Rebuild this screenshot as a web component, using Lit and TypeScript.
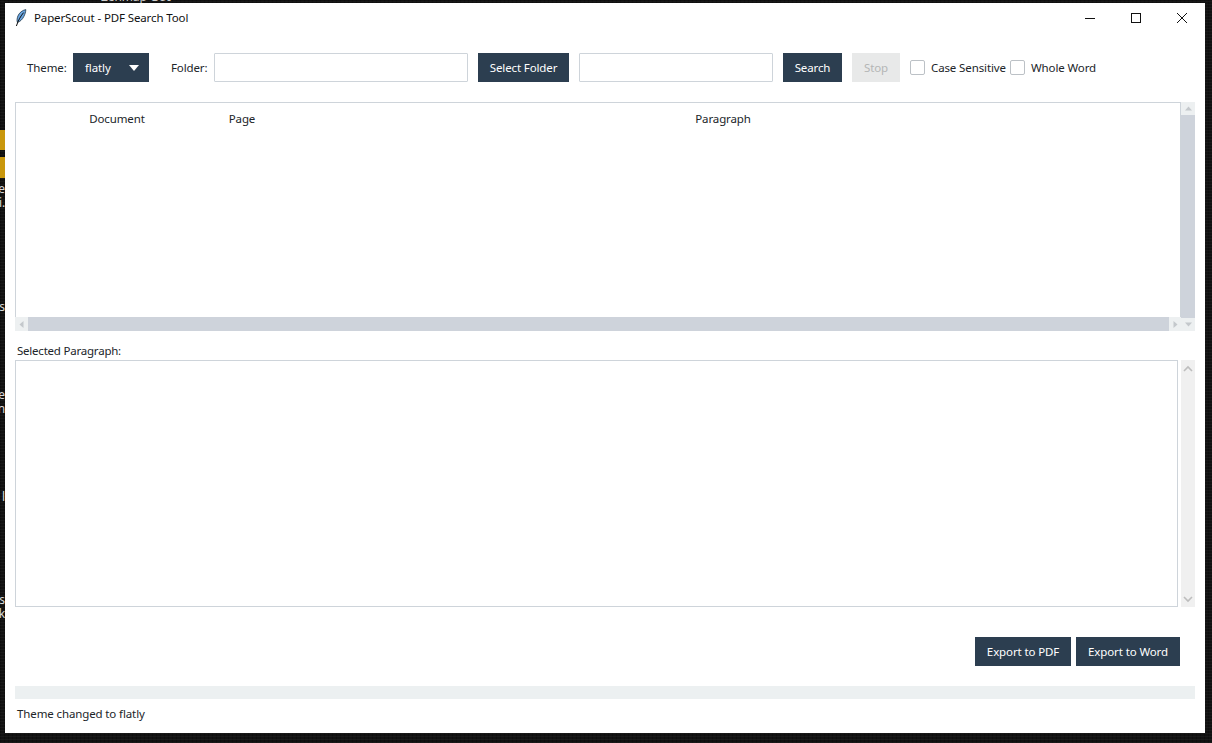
import { LitElement, html, css } from "lit";
import { customElement } from "lit/decorators.js";

const triangle = (d: string, fill: string) =>
  html`<svg width="9" height="9" viewBox="0 0 9 9"><path d="${d}" fill="${fill}"></path></svg>`;

const deskBits: [string, number][] = [
  ["e", 183], ["i.", 197], ["s", 301], ["e", 389], ["n", 403], ["l", 491], ["s", 594], ["k", 608],
];

@customElement("app-root")
export class AppRoot extends LitElement {
  static styles = css`
    :host {
      display: block;
      position: relative;
      width: 1212px;
      height: 743px;
      overflow: hidden;
      background-color: #111;
      background-image:
        repeating-linear-gradient(0deg, rgba(255,255,255,0.035) 0 1px, transparent 1px 3px),
        repeating-linear-gradient(90deg, rgba(0,0,0,0.25) 0 1px, transparent 1px 4px);
      font-family: "Noto Sans", "Open Sans", sans-serif;
      font-size: 11.5px;
      letter-spacing: -0.12px;
      color: #212529;
    }
    .desk { position: absolute; background: #c9970c; width: 5px; left: 0; }
    .desk.a { top: 130px; height: 20px; }
    .desk.b { top: 157px; height: 21px; }
    .desk-bit {
      position: absolute; left: 0; width: 5px; height: 12px; overflow: hidden;
      display: flex; justify-content: flex-end; color: #d8d8d8; font-size: 12px; line-height: 12px;
    }
    .desk-text {
      position: absolute; left: 101px; top: -11px; color: #cfcfcf; font-size: 12px; line-height: 16px;
    }
    .stage { padding: 3px 7px 10px 5px; height: 730px; }
    .window {
      position: relative;
      width: 1200px;
      height: 730px;
      background: #fff;
      display: flex;
      flex-direction: column;
    }
    .title { height: 30px; display: flex; align-items: center; flex: none; }
    .app-icon { margin-left: 10px; width: 12px; height: 18px; flex: none; }
    .title-text { margin-left: 7px; color: #111; line-height: 16px; }
    .caps { margin-left: auto; display: flex; height: 30px; }
    .cap { width: 46px; display: flex; align-items: center; justify-content: center; }
    .toolbar {
      flex: none; height: 29px; margin-top: 20px; padding-left: 22px;
      display: flex; align-items: center;
    }
    .lbl { white-space: nowrap; line-height: 16px; flex: none; }
    .lbl-theme { width: 39px; }
    .lbl-folder { width: 36px; margin-left: 22px; }
    .lbl-case { width: 79px; margin-left: 6px; }
    .lbl-word { margin-left: 6px; }
    .combo {
      width: 76px; height: 29px; margin-left: 7px; background: #2c3e50; color: #fff; flex: none;
      display: flex; align-items: center; padding-left: 12px; box-sizing: border-box;
    }
    .combo i {
      margin-left: auto; margin-right: 10px; width: 0; height: 0;
      border-left: 5.5px solid transparent; border-right: 5.5px solid transparent; border-top: 6px solid #fff;
    }
    .entry { height: 29px; box-sizing: border-box; border: 1px solid #ced4da; border-radius: 1px; background: #fff; flex: none; margin-left: 10px; }
    .entry.folder { width: 254px; margin-left: 7px; }
    .entry.query { width: 194px; }
    .btn {
      height: 29px; box-sizing: border-box; background: #2c3e50; color: #fff; display: flex;
      align-items: center; justify-content: center; white-space: nowrap; flex: none;
    }
    .toolbar .btn { margin-left: 10px; }
    .btn.off { background: #e8e9e9; color: #b4b6b6; }
    .w91 { width: 91px; } .w59 { width: 59px; } .w48 { width: 48px; } .w96 { width: 96px; } .w104 { width: 104px; }
    .check { width: 15px; height: 15px; box-sizing: border-box; border: 1px solid #bcc1c6; border-radius: 2px; background: #fff; flex: none; }
    .check.first { margin-left: 10px; }

    .tree {
      flex: none; margin: 20px 10px 0 10px; height: 229px;
      display: grid; grid-template-columns: 1fr 14px; grid-template-rows: 215px 14px;
    }
    .tree-body { border: 1px solid #ced4da; border-bottom: 0; background: #fff; }
    .tree-head { display: grid; grid-template-columns: 202px 48px 1fr; height: 31px; align-items: center; text-align: center; }
    .sb-v { display: flex; flex-direction: column; background: #ecf0f1; }
    .sb-arrow { flex: none; display: flex; align-items: center; justify-content: center; background: #edf0f1; }
    .sb-v .thumb { flex: 1; background: #ced3db; margin-bottom: -1px; position: relative; }
    .sb-v .sb-arrow { height: 13px; }
    .sb-h { display: flex; background: #ecf0f1; }
    .sb-h .sb-arrow { width: 13px; }
    .sb-h .sb-arrow.end { width: 12px; }
    .sb-h .thumb { flex: 1; background: #ced3db; }
    .corner { display: flex; align-items: center; justify-content: center; background: #edf0f1; }

    .sel-label { flex: none; margin: 12px 0 0 12px; height: 17px; line-height: 16px; letter-spacing: -0.22px; }
    .text-wrap { flex: none; margin: 0 10px; height: 247px; display: flex; }
    .text-area { flex: 1; border: 1px solid #ced4da; background: #fff; }
    .text-sb {
      width: 14px; margin-left: 3px; background: #f0f0f0;
      display: flex; flex-direction: column; justify-content: space-between; align-items: center;
    }
    .text-sb div { height: 17px; display: flex; align-items: center; justify-content: center; }
    .actions { flex: none; display: flex; justify-content: flex-end; gap: 5px; margin: 30px 25px 0 0; }
    .progress { flex: none; height: 13px; margin: 20px 10px 0; background: #ecf0f1; }
    .status { flex: none; margin: 7px 0 0 12px; line-height: 16px; }
  `;

  render() {
    return html`
      <div class="desk a"></div>
      <div class="desk b"></div>
      ${deskBits.map(([t, y]) => html`<div class="desk-bit" style="top:${y}px">${t}</div>`)}
      <div class="desk-text">Zenmap GUI</div>
      <div class="stage">
        <div class="window">
          <div class="title">
            <svg class="app-icon" viewBox="0 0 12 18">
              <path d="M10.8 0.6 C7.6 1.2 4.2 3.6 2.9 7 C2 9.4 1.8 11.6 2.4 13.4 C5 12.8 7.4 10.4 8.8 7.6 C10 5.2 10.8 2.8 10.8 0.6 Z" fill="#6aa5e0" stroke="#1c3347" stroke-width="0.8"></path>
              <path d="M8.6 3.6 C6 6.6 3.2 11.2 1.4 17" fill="none" stroke="#0c0c0c" stroke-width="1"></path>
            </svg>
            <span class="title-text">PaperScout - PDF Search Tool</span>
            <div class="caps">
              <div class="cap"><svg width="10" height="10" viewBox="0 0 10 10"><path d="M0 5.5H10" stroke="#111" stroke-width="1"></path></svg></div>
              <div class="cap"><svg width="10" height="10" viewBox="0 0 10 10"><rect x="0.5" y="0.5" width="9" height="9" fill="none" stroke="#111"></rect></svg></div>
              <div class="cap"><svg width="10" height="10" viewBox="0 0 10 10"><path d="M0 0L10 10M10 0L0 10" stroke="#111" stroke-width="1"></path></svg></div>
            </div>
          </div>
          <div class="toolbar">
            <span class="lbl lbl-theme">Theme:</span>
            <div class="combo">flatly<i></i></div>
            <span class="lbl lbl-folder">Folder:</span>
            <div class="entry folder"></div>
            <div class="btn w91">Select Folder</div>
            <div class="entry query"></div>
            <div class="btn w59">Search</div>
            <div class="btn off w48">Stop</div>
            <div class="check first"></div>
            <span class="lbl lbl-case">Case Sensitive</span>
            <div class="check"></div>
            <span class="lbl lbl-word">Whole Word</span>
          </div>
          <div class="tree">
            <div class="tree-body">
              <div class="tree-head"><span>Document</span><span>Page</span><span>Paragraph</span></div>
            </div>
            <div class="sb-v">
              <div class="sb-arrow">${triangle("M1 6.5L4.5 2.5L8 6.5Z", "#c4c8cc")}</div>
              <div class="thumb"></div>
            </div>
            <div class="sb-h">
              <div class="sb-arrow">${triangle("M6.5 1L2.5 4.5L6.5 8Z", "#c4c8cc")}</div>
              <div class="thumb"></div>
              <div class="sb-arrow end">${triangle("M2.5 1L6.5 4.5L2.5 8Z", "#c4c8cc")}</div>
            </div>
            <div class="corner">${triangle("M1 2.5L4.5 6.5L8 2.5Z", "#c4c8cc")}</div>
          </div>
          <div class="sel-label">Selected Paragraph:</div>
          <div class="text-wrap">
            <div class="text-area"></div>
            <div class="text-sb">
              <div><svg width="10" height="8" viewBox="0 0 10 8"><path d="M1 6L5 2L9 6" fill="none" stroke="#bdbdbd" stroke-width="1.6"></path></svg></div>
              <div><svg width="10" height="8" viewBox="0 0 10 8"><path d="M1 2L5 6L9 2" fill="none" stroke="#bdbdbd" stroke-width="1.6"></path></svg></div>
            </div>
          </div>
          <div class="actions">
            <div class="btn w96">Export to PDF</div>
            <div class="btn w104">Export to Word</div>
          </div>
          <div class="progress"></div>
          <div class="status">Theme changed to flatly</div>
        </div>
      </div>
    `;
  }
}
